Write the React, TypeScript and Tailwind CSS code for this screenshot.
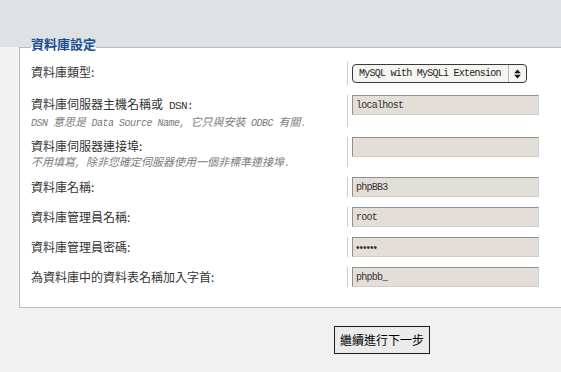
import React from "react";

const MONO = "font-['Liberation_Mono',monospace]";

function Row({
  h,
  label,
  hint,
  children,
}: {
  h: string;
  label: React.ReactNode;
  hint?: React.ReactNode;
  children: React.ReactNode;
}) {
  return (
    <div className={`flex ${h}`}>
      <div className="w-[316px] shrink-0">
        <div className={`text-[12px] text-[#333] ${hint ? "leading-[18px]" : "leading-[20px]"}`}>{label}</div>
        {hint && <div className="text-[11px] leading-[13px] italic text-[#7a7a7a]">{hint}</div>}
      </div>
      <div className="border-l border-[#cccccc] pl-[4px]">{children}</div>
    </div>
  );
}

function Field({ value, type = "text" }: { value: string; type?: string }) {
  return (
    <input
      readOnly
      type={type}
      value={value}
      className={`block h-[20px] w-[187px] border border-t-[#8f8f8f] border-l-[#8f8f8f] border-r-[#d2cec6] border-b-[#d2cec6] bg-[#e3dfd8] px-[3px] text-[#333] outline-none ${
        type === "password"
          ? "font-['Liberation_Sans',sans-serif] text-[10px]"
          : `${MONO} text-[10px] tracking-[-0.75px]`
      }`}
    />
  );
}

export default function App() {
  return (
    <div className="h-[372px] w-[561px] overflow-hidden bg-[#f2f2f2] font-['Noto_Sans_CJK_TC',sans-serif]">
      <div className="h-[47px] bg-[#dfe2e5]" />
      <fieldset className="-mt-[11px] ml-[19px] w-[570px] border border-[#bcbcbc] bg-white pt-[3px] pb-[20px] pl-[11px]">
        <legend className="pb-[7px] text-[13px] leading-[16px] font-bold text-[#1a4f94]">資料庫設定</legend>
        <div className="flex flex-col gap-[10px]">
          <Row h="h-[23px]" label="資料庫類型:">
            <div className="mt-[2px] flex h-[19px] w-[175px] items-center rounded-[4px] border border-[#3a3a3a] bg-[#f6f5f1]">
              <span className={`${MONO} flex-1 pl-[6px] text-[10px] leading-none tracking-[-0.75px] text-[#222]`}>
                MySQL with MySQLi Extension
              </span>
              <div className="flex h-full w-[18px] items-center justify-center border-l border-[#b8b8b8]">
                <svg width="7" height="10" viewBox="0 0 7 10">
                  <path d="M3.5 0.5L6.8 4.2H0.2z M3.5 9.5L0.2 5.8h6.6z" fill="#111" />
                </svg>
              </div>
            </div>
          </Row>
          <Row
            h="h-[32px]"
            label={
              <>
                資料庫伺服器主機名稱或<span className={`${MONO} text-[11px] tracking-[-0.6px]`}> DSN:</span>
              </>
            }
            hint={
              <>
                <span className={`${MONO} text-[10px] tracking-[-0.5px]`}>DSN </span>意思是
                <span className={`${MONO} text-[10px] tracking-[-0.5px]`}> Data Source Name, </span>它只與安裝
                <span className={`${MONO} text-[10px] tracking-[-0.5px]`}> ODBC </span>有關
                <span className={`${MONO} text-[10px] tracking-[-0.5px]`}>.</span>
              </>
            }
          >
            <Field value="localhost" />
          </Row>
          <Row
            h="h-[30px]"
            label="資料庫伺服器連接埠:"
            hint={
              <>
                不用填寫<span className={`${MONO} text-[10px] tracking-[-0.5px]`}>, </span>除非您確定伺服器使用一個非標準連接埠
                <span className={`${MONO} text-[10px] tracking-[-0.5px]`}>.</span>
              </>
            }
          >
            <Field value="" />
          </Row>
          <Row h="h-[20px]" label="資料庫名稱:">
            <Field value="phpBB3" />
          </Row>
          <Row h="h-[20px]" label="資料庫管理員名稱:">
            <Field value="root" />
          </Row>
          <Row h="h-[20px]" label="資料庫管理員密碼:">
            <Field type="password" value="secret" />
          </Row>
          <Row h="h-[20px]" label="為資料庫中的資料表名稱加入字首:">
            <Field value="phpbb_" />
          </Row>
        </div>
      </fieldset>
      <div className="pt-[18px] pl-[334px]">
        <button className="h-[28px] w-[96px] border border-[#1b1b1b] bg-[#ebebeb] text-[12px] leading-none text-black">
          繼續進行下一步
        </button>
      </div>
    </div>
  );
}
